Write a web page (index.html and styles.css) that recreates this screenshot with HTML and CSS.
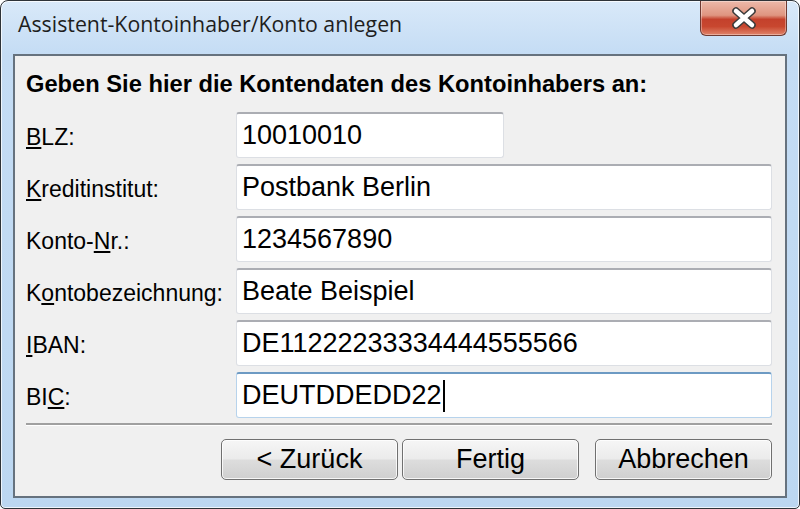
FILE: index.html
```html
<!DOCTYPE html>
<html><head>
<meta charset="utf-8">
<link rel="stylesheet" href="styles.css">
</head><body>
<div class="window">
	<div class="titlebar">
		<div class="title">Assistent-Kontoinhaber/Konto anlegen</div>
		<div class="close_btn">
			<svg width="28" height="22" viewBox="0 0 28 22"><path d="M6 4 L22 18 M22 4 L6 18" stroke="#3b3b3b" stroke-width="7.5" stroke-linecap="round"/><path d="M6 4 L22 18 M22 4 L6 18" stroke="#fff" stroke-width="4.5" stroke-linecap="round"/></svg>
		</div>
	</div>
	<div class="client">
		<div class="headline">Geben Sie hier die Kontendaten des Kontoinhabers an:</div>
		<div class="form_rows">
			<label><u>B</u>LZ:</label><div class="edit short">10010010</div>
			<label><u>K</u>reditinstitut:</label><div class="edit">Postbank Berlin</div>
			<label>Konto-<u>N</u>r.:</label><div class="edit">1234567890</div>
			<label>K<u>o</u>ntobezeichnung:</label><div class="edit">Beate Beispiel</div>
			<label><u>I</u>BAN:</label><div class="edit">DE11222233334444555566</div>
			<label>BI<u>C</u>:</label><div class="edit focus">DEUTDDEDD22<span class="caret"></span></div>
		</div>
		<div class="separator"></div>
		<div class="buttons">
			<div class="btn">&lt; Zurück</div>
			<div class="btn">Fertig</div>
			<div class="btn last">Abbrechen</div>
		</div>
	</div>
</div>
</body></html>
```
FILE: styles.css
```css
html,body{margin:0;padding:0;background:#fff;}
.window{width:800px;height:509px;box-sizing:border-box;border:1px solid #2e3338;border-radius:8px 8px 5px 5px;background:linear-gradient(180deg,#d9e9f9 0,#c4dcf4 54px,#bcd7f1 100%);box-shadow:inset 0 0 0 1px rgba(255,255,255,.75);display:flex;flex-direction:column;overflow:hidden;}
.titlebar{height:53px;display:flex;align-items:flex-start;}
.title{padding:11px 0 0 17px;font-family:"Open Sans","Noto Sans",sans-serif;font-size:21.3px;line-height:24px;color:#1e1e1e;}
.close_btn{margin-left:auto;margin-right:12px;width:87px;height:35px;box-sizing:border-box;border:1px solid #6e3a32;border-top:0;border-radius:0 0 6px 6px;background:linear-gradient(180deg,#ecb9aa 0,#df9580 42%,#c4412c 54%,#c8472f 75%,#e0846a 100%);box-shadow:inset 0 0 0 1px rgba(255,255,255,.35);display:flex;align-items:center;justify-content:center;}
.close_btn svg{display:block;margin-top:-1px;}
.client{margin:0 12px;height:444px;box-sizing:border-box;border:2px solid #66727e;background:#f0f0f0;padding:14px 13px 0 11px;font-family:"Liberation Sans",Arial,sans-serif;color:#000;}
.headline{font-size:23.7px;font-weight:bold;line-height:28px;height:28px;}
.form_rows{margin-top:14px;display:grid;grid-template-columns:210px 1fr;grid-auto-rows:46px;row-gap:6px;align-items:center;}
.form_rows label{font-size:23px;line-height:26px;padding-top:4px;}
.form_rows u{text-underline-offset:2px;}
.edit{height:46px;box-sizing:border-box;border:1px solid #dcdfe4;border-top:2px solid #abadb3;border-radius:3px;background:#fff;font-size:27px;padding:0 5px;display:flex;align-items:center;}
.edit.short{width:268px;}
.edit.focus{border-color:#b7d3ec;border-top-color:#6d9ac3;}
.caret{display:inline-block;width:2px;height:32px;background:#000;margin-left:1px;}
.separator{margin-top:5px;height:2px;background:#a0a0a0;border-bottom:1px solid #fff;}
.buttons{margin-top:13px;display:flex;justify-content:flex-end;gap:4px;}
.btn{width:177px;height:41px;box-sizing:border-box;border:1.5px solid #707070;border-radius:5px;background:linear-gradient(180deg,#f6f6f6 0,#ebebeb 48%,#dddddd 52%,#cfcfcf 100%);box-shadow:inset 0 0 0 1px rgba(255,255,255,.8);font-size:27px;display:flex;align-items:center;justify-content:center;}
.btn.last{margin-left:12px;}
```
